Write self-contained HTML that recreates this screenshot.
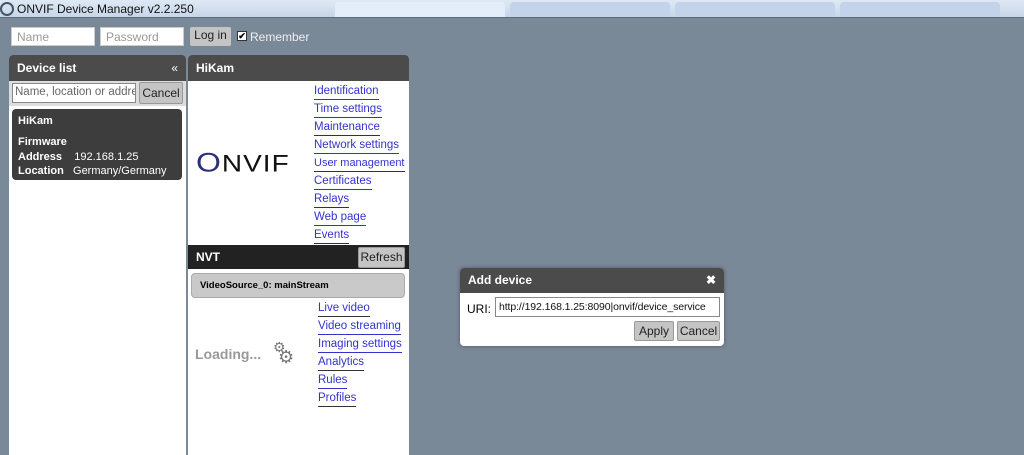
<!DOCTYPE html>
<html><head><style>
body{margin:0;width:1024px;height:446px;background:#7a8998;font-family:"Liberation Sans",sans-serif;font-size:12px;position:relative;overflow:hidden}
.a{position:absolute}
.tb{left:0;top:0;width:1024px;height:18px;background:linear-gradient(#dfe9f5,#c5d5e8)}
.tab{top:2px;height:16px;background:#c2d3ea;border-radius:4px 4px 0 0}
.inp{background:#fff;border:1px solid #ccc;color:#999;font-size:12px;padding:3px 5px;box-sizing:border-box}
.btn{background:#c4c4c4;border:1px solid #999;border-radius:2px;color:#222;text-align:center;box-sizing:border-box}
.hd{background:#4b4b4b;color:#fff;font-weight:bold;padding:6px 8px;box-sizing:border-box;border-radius:4px 4px 0 0;height:26px}
.lk{color:#3333cc;display:block;width:fit-content;border-bottom:1px solid #3333cc;line-height:15px;margin-bottom:2px;font-size:11.5px}
.lk2{border-bottom-color:#333}
</style></head><body>
<div class="a tb"></div>
<div class="a" style="left:0;top:2px;width:14px;height:14px;border-radius:50%;border:2px solid #456;box-sizing:border-box"></div>
<div class="a" style="left:17px;top:2px;font-size:12px;color:#111">ONVIF Device Manager v2.2.250</div>
<div class="a tab" style="left:335px;width:170px;background:#e4eefa"></div>
<div class="a tab" style="left:510px;width:160px"></div>
<div class="a tab" style="left:675px;width:160px"></div>
<div class="a tab" style="left:840px;width:160px"></div>
<div class="a" style="left:0;top:17px;width:1024px;height:1px;background:#5b6b7c"></div>

<div class="a inp" style="left:11px;top:27px;width:84px;height:19px;padding-top:2px">Name</div>
<div class="a inp" style="left:100px;top:27px;width:84px;height:19px;padding-top:2px">Password</div>
<div class="a btn" style="left:190px;top:27px;width:41px;height:19px;line-height:17px;font-size:12px;border:none">Log in</div>
<div class="a" style="left:237px;top:31px;width:10px;height:10px;background:#fff;border:1px solid #333;box-sizing:border-box;font-size:9px;line-height:8px;text-align:center;font-weight:bold">✔</div>
<div class="a" style="left:250px;top:30px;color:#eee">Remember</div>

<div class="a" style="left:9px;top:55px;width:177px;height:400px;background:#fff;border-radius:4px 4px 0 0"></div>
<div class="a hd" style="left:9px;top:55px;width:177px">Device list<span style="float:right;font-weight:normal">«</span></div>
<div class="a" style="left:9px;top:81px;width:177px;height:25px;background:#ddd"></div>
<div class="a inp" style="left:12px;top:83px;width:124px;height:20px;color:#666;padding:2px 2px;white-space:nowrap;overflow:hidden;border-color:#888;font-size:11.5px">Name, location or address</div>
<div class="a btn" style="left:139px;top:82px;width:44px;height:22px;line-height:20px">Cancel</div>
<div class="a" style="left:12px;top:109px;width:170px;height:71px;background:#3d3d3d;border-radius:4px;color:#fff;font-size:11px">
<div style="position:absolute;left:6px;top:6px;font-weight:bold">HiKam</div>
<div style="position:absolute;left:6px;top:26px;line-height:14.5px"><b>Firmware</b><br><b>Address</b>&nbsp;&nbsp;&nbsp;&nbsp;192.168.1.25<br><b>Location</b>&nbsp;&nbsp;&nbsp;Germany/Germany</div>
</div>

<div class="a" style="left:188px;top:55px;width:221px;height:400px;background:#fff;border-radius:4px 4px 0 0"></div>
<div class="a hd" style="left:188px;top:55px;width:221px">HiKam</div>
<div class="a" style="left:196px;top:144px;font-size:28px;color:#111;letter-spacing:1px;transform:scaleY(0.85)"><span style="color:#2b2f7a;font-size:32px">O</span>NVIF</div>
<div class="a" style="left:314px;top:84px">
<span class="lk">Identification</span><span class="lk">Time settings</span><span class="lk lk2">Maintenance</span><span class="lk">Network settings</span><span class="lk lk2" style="font-size:11px">User management</span><span class="lk">Certificates</span><span class="lk lk2">Relays</span><span class="lk">Web page</span><span class="lk lk2">Events</span></div>
<div class="a" style="left:188px;top:245px;width:221px;height:24px;background:#222;color:#fff;font-weight:bold;padding:5px 8px;box-sizing:border-box">NVT</div>
<div class="a btn" style="left:358px;top:247px;width:47px;height:21px;line-height:19px">Refresh</div>
<div class="a" style="left:191px;top:273px;width:214px;height:25px;background:#c9c9c9;border:1px solid #aaa;border-radius:4px;box-sizing:border-box;font-size:9.5px;font-weight:bold;padding:6px 8px">VideoSource_0: mainStream</div>
<div class="a" style="left:195px;top:346px;font-size:14px;font-weight:bold;color:#999">Loading...</div>
<div class="a" style="left:273px;top:339px;font-size:14px;color:#777">⚙</div>
<div class="a" style="left:278px;top:347px;font-size:18px;color:#777">⚙</div>
<div class="a" style="left:318px;top:301px">
<span class="lk lk2">Live video</span><span class="lk">Video streaming</span><span class="lk">Imaging settings</span><span class="lk lk2">Analytics</span><span class="lk">Rules</span><span class="lk lk2">Profiles</span></div>

<div class="a" style="left:460px;top:268px;width:264px;height:78px;background:#fff;border-radius:4px;box-shadow:0 0 4px #556"></div>
<div class="a hd" style="left:460px;top:268px;width:264px;height:25px;padding:5px 8px">Add device<span style="float:right">✖</span></div>
<div class="a" style="left:467px;top:302px">URI:</div>
<div class="a" style="left:495px;top:297px;width:225px;height:20px;border:1px solid #888;box-sizing:border-box;padding:3px 3px;color:#111;font-size:10.5px;white-space:nowrap;overflow:hidden;letter-spacing:-0.1px">http://192.168.1.25:8090|onvif/device_service</div>
<div class="a btn" style="left:634px;top:321px;width:40px;height:20px;line-height:18px">Apply</div>
<div class="a btn" style="left:677px;top:321px;width:43px;height:20px;line-height:18px">Cancel</div>
</body></html>
